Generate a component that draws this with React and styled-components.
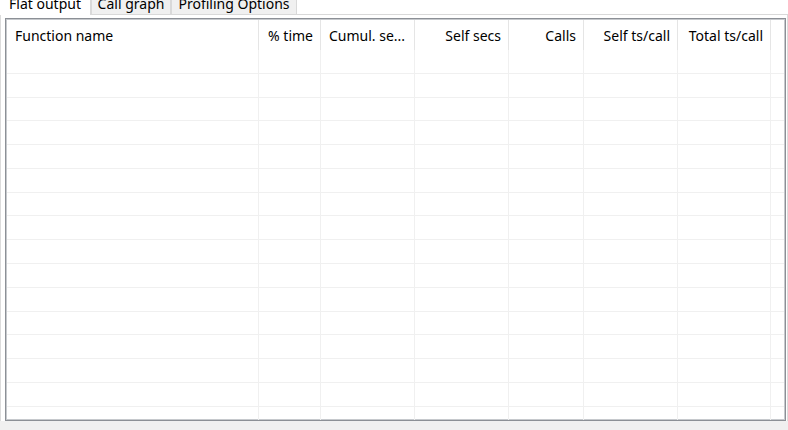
import React from 'react'
import styled, { createGlobalStyle } from 'styled-components'

const GlobalStyle = createGlobalStyle`
	html, body {
		margin: 0;
		padding: 0;
		background: #f0f0f0;
		overflow: hidden;
	}
	body {
		font-family: "Noto Sans", "Open Sans", sans-serif;
		font-size: 14px;
		color: #000;
	}
`

// css
const Window = styled.div`
	width: 788px;
	height: 430px;
	display: flex;
	flex-direction: column;
	background: #f0f0f0;
`
const TabStrip = styled.div`
	display: flex;
	align-items: flex-end;
	height: 22px;
	margin-top: -8px;
	background: #ffffff;
`
const Tab = styled.div`
	position: relative;
	z-index: ${props => (props.$active ? 1 : 0)};
	box-sizing: border-box;
	width: ${props => props.$width}px;
	height: ${props => (props.$active ? 23 : 22)}px;
	margin-bottom: ${props => (props.$active ? -1 : 0)}px;
	line-height: 21px;
	text-align: center;
	white-space: nowrap;
	background: ${props => (props.$active ? '#ffffff' : '#f0f0f0')};
	border: 1px solid #d9d9d9;
	border-bottom: none;
	border-left: ${props => (props.$first ? 'none' : '1px solid #d9d9d9')};
`
const Panel = styled.div`
	box-sizing: border-box;
	height: 407px;
	padding: 3px 1px 0 4px;
	background: #ffffff;
	border-top: 1px solid #d9d9d9;
	border-left: 1px solid #dcdcdc;
	border-right: 1px solid #dcdcdc;
`
const ListView = styled.div`
	box-sizing: border-box;
	height: 403px;
	border: 1px solid #8c9096;
	box-shadow: inset 1px 1px 0 #c6c9cd, inset -1px -1px 0 #c6c9cd;
	padding: 1px;
	overflow: hidden;
	background: #ffffff;
`
const Grid = styled.div`
	display: grid;
	grid-template-columns: 252px 62px 94px 94px 75px 94px 93px 13px;
`
const HeadCell = styled.div`
	box-sizing: border-box;
	height: 30px;
	padding-top: 1px;
	line-height: 29px;
	padding-left: ${props => (props.$align === 'right' ? 4 : 8)}px;
	padding-right: ${props => (props.$align === 'right' ? 7 : 4)}px;
	text-align: ${props => props.$align || 'left'};
	white-space: nowrap;
	overflow: hidden;
	text-overflow: ellipsis;
	border-right: ${props => (props.$last ? 'none' : '1px solid #e5e5e5')};
`
const Cell = styled.div`
	box-sizing: border-box;
	height: 23.79px;
	border-bottom: 1px solid #f0f0f0;
	border-right: ${props => (props.$last ? 'none' : '1px solid #f0f0f0')};
`
const Footer = styled.div`
	flex: 1;
	background: #f0f0f0;
`

const tabs = [
	{ label: 'Flat output', width: 91, active: true },
	{ label: 'Call graph', width: 80 },
	{ label: 'Profiling Options', width: 126 },
]

const columns = [
	{ label: 'Function name' },
	{ label: '% time', align: 'right' },
	{ label: 'Cumul. se...', align: 'left' },
	{ label: 'Self secs', align: 'right' },
	{ label: 'Calls', align: 'right' },
	{ label: 'Self ts/call', align: 'right' },
	{ label: 'Total ts/call', align: 'right' },
	{ label: '', last: true },
]

const ROWS = 16

export default function App() {
	return (
		<Window>
			<GlobalStyle />
			<TabStrip>
				{tabs.map((t, i) => (
					<Tab key={t.label} $width={t.width} $active={t.active} $first={i === 0}>
						{t.label}
					</Tab>
				))}
			</TabStrip>
			<Panel>
				<ListView>
					<Grid>
						{columns.map((c, i) => (
							<HeadCell key={'h' + i} $align={c.align} $last={c.last}>
								{c.label}
							</HeadCell>
						))}
						{Array.from({ length: ROWS }).map((_, r) =>
							columns.map((c, i) => <Cell key={r + '-' + i} $last={c.last} />)
						)}
					</Grid>
				</ListView>
			</Panel>
			<Footer />
		</Window>
	)
}
